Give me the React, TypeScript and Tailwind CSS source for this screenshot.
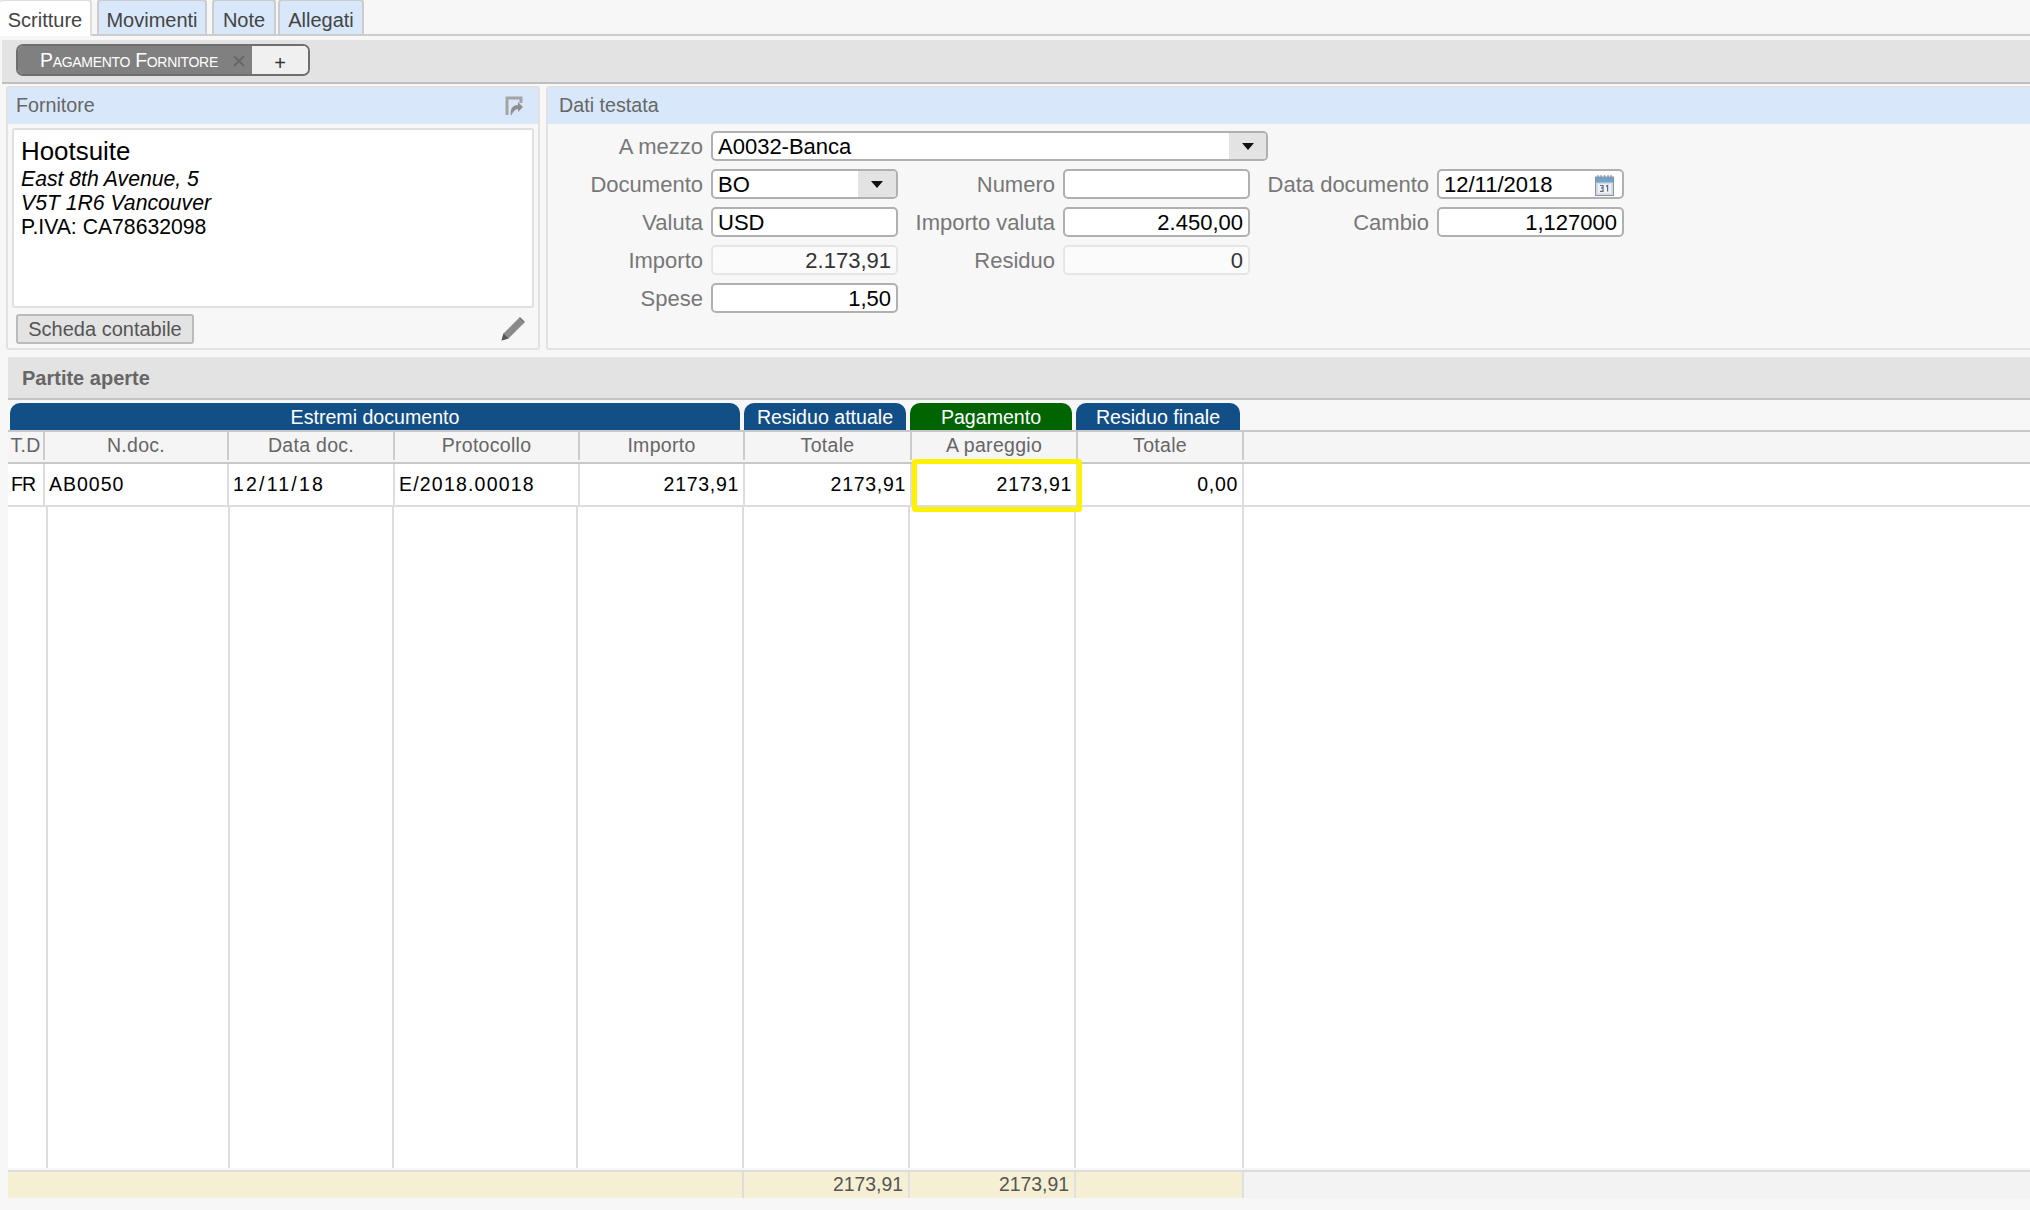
import React from "react";

const sans = "font-['Liberation_Sans',Arial,sans-serif]";

const cols = [37, 184, 166, 185, 165, 167, 166, 166];
const bodyCols = [40, 182, 164, 184, 166, 166, 166, 168];

function Label({ w, children }: { w: number; children: React.ReactNode }) {
  return (
    <div className="shrink-0 pr-[8px] text-right text-[22px] leading-[32px] text-[#777777]" style={{ width: w }}>
      {children}
    </div>
  );
}

function Field({
  w,
  value,
  right,
  disabled,
  drop,
  dropW,
  cal,
}: {
  w: number;
  value?: string;
  right?: boolean;
  disabled?: boolean;
  drop?: boolean;
  dropW?: number;
  cal?: boolean;
}) {
  return (
    <div
      className={`relative flex h-[30px] shrink-0 items-center overflow-hidden rounded-[5px] border-2 pt-[1px] text-[22px] leading-none ${
        disabled ? "border-[#e6e6e6] bg-[#fbfbfb] text-[#333333]" : "border-[#b0b0b0] bg-white text-black"
      } ${right ? "justify-end pr-[5px]" : "pl-[5px]"}`}
      style={{ width: w }}
    >
      {value}
      {drop && (
        <div className="absolute inset-y-0 right-0 flex items-center justify-center bg-[#e3e3e3]" style={{ width: dropW }}>
          <svg width="12" height="7" viewBox="0 0 12 7">
            <path d="M0 0h12L6 7z" fill="#111111" />
          </svg>
        </div>
      )}
      {cal && (
        <svg className="absolute right-[8px] top-[3px]" width="19" height="22" viewBox="0 0 19 22">
          <rect x="0.5" y="3" width="18" height="18.5" fill="#d5dbe3" stroke="#8a93a0" />
          <rect x="1" y="3" width="17" height="5.5" fill="#6fa3d0" />
          <path d="M3 1v4M6 1v4M9.5 1v4M13 1v4M16 1v4" stroke="#8a93a0" strokeWidth="1.2" />
          <rect x="3" y="10" width="13" height="9.5" fill="#eef0f3" />
          <path d="M5 11.5h3v2.4H6M8 13.9v3.4H5M11 12.3l1.6-.8v6" fill="none" stroke="#5d6b7c" strokeWidth="1.2" />
        </svg>
      )}
    </div>
  );
}

function Tab({ w, children, active }: { w: number; children: React.ReactNode; active?: boolean }) {
  return (
    <div
      className={`flex h-[35px] shrink-0 items-center justify-center rounded-t-[4px] border-2 text-[20px] text-[#444444] ${
        active
          ? "relative z-10 -mb-[2px] h-[37px] border-b-0 border-l-0 border-[#dddddd] bg-white pt-[2px]"
          : "border-b-0 border-[#cccccc] bg-[#d8e8fa] pt-[5px]"
      }`}
      style={{ width: w }}
    >
      {children}
    </div>
  );
}

function PanelHeader({ title, pl, children }: { title: string; pl: number; children?: React.ReactNode }) {
  return (
    <div
      className="flex h-[36px] shrink-0 items-center justify-between bg-[#d8e8fa] pr-[15px] text-[19.7px] text-[#666666]"
      style={{ paddingLeft: pl }}
    >
      {title}
      {children}
    </div>
  );
}

function Band({ w, bg, children, mr }: { w: number; bg: string; children: React.ReactNode; mr: number }) {
  return (
    <div
      className={`flex h-[27px] shrink-0 items-center justify-center rounded-t-[10px] pt-[2px] text-[19.6px] text-white ${bg}`}
      style={{ width: w, marginRight: mr }}
    >
      {children}
    </div>
  );
}

export default function App() {
  const headers = ["T.D", "N.doc.", "Data doc.", "Protocollo", "Importo", "Totale", "A pareggio", "Totale"];
  const row: { v: string; cls: string }[] = [
    { v: "FR", cls: "pl-[3px] tracking-[-1px]" },
    { v: "AB0050", cls: "pl-[4px] tracking-[1px]" },
    { v: "12/11/18", cls: "pl-[4px] tracking-[2.2px]" },
    { v: "E/2018.00018", cls: "pl-[4px] tracking-[1.2px]" },
    { v: "2173,91", cls: "justify-end pr-[4px] tracking-[0.7px]" },
    { v: "2173,91", cls: "justify-end pr-[4px] tracking-[0.7px]" },
    { v: "2173,91", cls: "justify-end pr-[4px] tracking-[0.7px]" },
    { v: "0,00", cls: "justify-end pr-[4px] tracking-[0.7px]" },
  ];

  return (
    <div className={`flex h-[1210px] w-[2030px] flex-col overflow-hidden bg-[#f7f7f7] ${sans}`}>
      {/* Tabs */}
      <div className="flex h-[36px] shrink-0 items-end gap-[5px] border-b-2 border-[#cccccc] pt-[1px]">
        <Tab w={92} active>Scritture</Tab>
        <Tab w={110}>Movimenti</Tab>
        <Tab w={64}>Note</Tab>
        <div className="-ml-[3px]">
          <Tab w={86}>Allegati</Tab>
        </div>
      </div>

      {/* Sub tabs */}
      <div className="ml-[2px] mt-[4px] flex h-[44px] shrink-0 items-start border-b-2 border-[#c0c0c0] bg-[#e3e3e3] pl-[14px] pt-[4px]">
        <div className="flex h-[32px] w-[294px] overflow-hidden rounded-[7px] border-2 border-[#6f6f6f]">
          <div className="flex w-[234px] items-center bg-[#808080] pl-[22px] pt-[2px] text-[19.4px] text-white">
            <span className="tracking-[-0.3px] [font-variant-caps:small-caps]">Pagamento Fornitore</span>
            <svg className="ml-[15px]" width="12" height="12" viewBox="0 0 12 12">
              <path d="M1 1l10 10M11 1L1 11" stroke="#666666" strokeWidth="1.8" />
            </svg>
          </div>
          <div className="flex flex-1 items-center justify-center bg-[#f0f0f0] pt-[5px] text-[20px] text-[#333333]">+</div>
        </div>
      </div>

      {/* Panels */}
      <div className="ml-[6px] mt-[2px] flex h-[264px] shrink-0 gap-[6px]">
        <div className="flex w-[534px] shrink-0 flex-col rounded-[3px] border-2 border-[#e2e2e2]">
          <PanelHeader title="Fornitore" pl={8}>
            <svg width="18" height="21" viewBox="0 0 18 21">
              <path d="M2 19V2h14v5" fill="none" stroke="#a4a4a4" strokeWidth="3" />
              <path d="M6 20c-1-7 1-11 7-11V6l5 5-5 5v-3c-3 0-5 3-7 7z" fill="#8f8f8f" />
            </svg>
          </PanelHeader>
          <div className="mx-[4px] mt-[4px] flex h-[180px] flex-col rounded-[3px] border-2 border-[#e0e0e0] bg-white pl-[7px] pt-[6px] text-[21.2px] leading-[24px] text-black">
            <div className="text-[25.9px] leading-[31px]">Hootsuite</div>
            <div className="italic">East 8th Avenue, 5</div>
            <div className="italic">V5T 1R6 Vancouver</div>
            <div>P.IVA: CA78632098</div>
          </div>
          <div className="flex flex-1 items-center justify-between pl-[8px] pr-[12px] pt-[2px]">
            <div className="flex h-[30px] w-[178px] items-center justify-center rounded-[3px] border-2 border-[#bbbbbb] bg-[#e3e3e3] text-[20px] text-[#555555]">
              Scheda contabile
            </div>
            <svg width="26" height="26" viewBox="0 0 26 26">
              <path d="M18.5 2.5l5 5L8.5 22.5l-7 2 2-7z" fill="#8a8a8a" />
              <path d="M20 1l5 5-1.6 1.6-5-5z" fill="#7a7a7a" />
              <path d="M1.5 24.5l2-7 5 5z" fill="#555555" />
            </svg>
          </div>
        </div>

        <div className="flex flex-1 flex-col rounded-l-[3px] border-y-2 border-l-2 border-[#e2e2e2]">
          <PanelHeader title="Dati testata" pl={11} />
          <div className="flex flex-col gap-[8px] pt-[7px]">
            <div className="flex h-[30px]">
              <Label w={163}>A mezzo</Label>
              <Field w={557} value="A0032-Banca" drop dropW={37} />
            </div>
            <div className="flex h-[30px]">
              <Label w={163}>Documento</Label>
              <Field w={187} value="BO" drop dropW={38} />
              <Label w={165}>Numero</Label>
              <Field w={187} />
              <Label w={187}>Data documento</Label>
              <Field w={187} value="12/11/2018" cal />
            </div>
            <div className="flex h-[30px]">
              <Label w={163}>Valuta</Label>
              <Field w={187} value="USD" />
              <Label w={165}>Importo valuta</Label>
              <Field w={187} value="2.450,00" right />
              <Label w={187}>Cambio</Label>
              <Field w={187} value="1,127000" right />
            </div>
            <div className="flex h-[30px]">
              <Label w={163}>Importo</Label>
              <Field w={187} value="2.173,91" right disabled />
              <Label w={165}>Residuo</Label>
              <Field w={187} value="0" right disabled />
            </div>
            <div className="flex h-[30px]">
              <Label w={163}>Spese</Label>
              <Field w={187} value="1,50" right />
            </div>
          </div>
        </div>
      </div>

      {/* Partite aperte */}
      <div className="ml-[8px] mt-[7px] flex h-[43px] shrink-0 items-center border-b-2 border-[#c4c4c4] bg-[#e3e3e3] pl-[14px] text-[20px] font-bold text-[#666666]">
        Partite aperte
      </div>

      {/* Table */}
      <div className="relative ml-[8px] flex flex-1 flex-col">
        <div className="mt-[3px] flex h-[27px] shrink-0 pl-[2px]">
          <Band w={730} bg="bg-[#134f87]" mr={4}>Estremi documento</Band>
          <Band w={162} bg="bg-[#134f87]" mr={4}>Residuo attuale</Band>
          <Band w={162} bg="bg-[#006400]" mr={4}>Pagamento</Band>
          <Band w={164} bg="bg-[#134f87]" mr={0}>Residuo finale</Band>
        </div>

        {/* Header row */}
        <div className="flex h-[34px] shrink-0 border-y-2 border-[#c8c8c8] bg-[#f5f5f5] pb-[2px]">
          {headers.map((h, i) => (
            <div
              key={i}
              className="flex shrink-0 items-center justify-center border-r-2 border-[#cccccc] text-[19.5px] tracking-[0.3px] text-[#666666]"
              style={{ width: cols[i] }}
            >
              {h}
            </div>
          ))}
        </div>

        {/* Data row */}
        <div className="relative flex h-[43px] shrink-0 border-b-2 border-[#dddddd] bg-white">
          {row.map((c, i) => (
            <div
              key={i}
              className={`flex shrink-0 items-center border-r-2 border-[#dddddd] text-[19.5px] text-black ${c.cls}`}
              style={{ width: cols[i] }}
            >
              {c.v}
            </div>
          ))}
          <div className="flex-1" />
          {/* highlight drawn over the cell */}
          <div className="absolute left-[904px] top-[-5px] h-[53px] w-[170px] rounded-[3px] border-[5px] border-[#fff200]" />
        </div>

        {/* Empty body */}
        <div className="flex h-[661px] shrink-0 bg-white">
          {bodyCols.map((w, i) => (
            <div key={i} className="shrink-0 border-r-2 border-[#dddddd]" style={{ width: w }} />
          ))}
        </div>

        {/* Footer */}
        <div className="mt-[2px] flex h-[28px] shrink-0 border-t-2 border-[#dcdcdc] bg-[#f3f3f3] text-[19.4px] leading-none text-[#555555]">
          <div className="w-[736px] shrink-0 border-r-2 border-[#dddddd] bg-[#f5f0d4]" />
          <div className="flex w-[166px] shrink-0 items-center justify-end border-r-2 border-[#e0e0e0] bg-[#f5f0d4] pr-[5px]">2173,91</div>
          <div className="flex w-[166px] shrink-0 items-center justify-end border-r-2 border-[#e0e0e0] bg-[#f5f0d4] pr-[5px]">2173,91</div>
          <div className="w-[168px] shrink-0 border-r-2 border-[#e0e0e0] bg-[#f5f0d4]" />
        </div>
      </div>
    </div>
  );
}
